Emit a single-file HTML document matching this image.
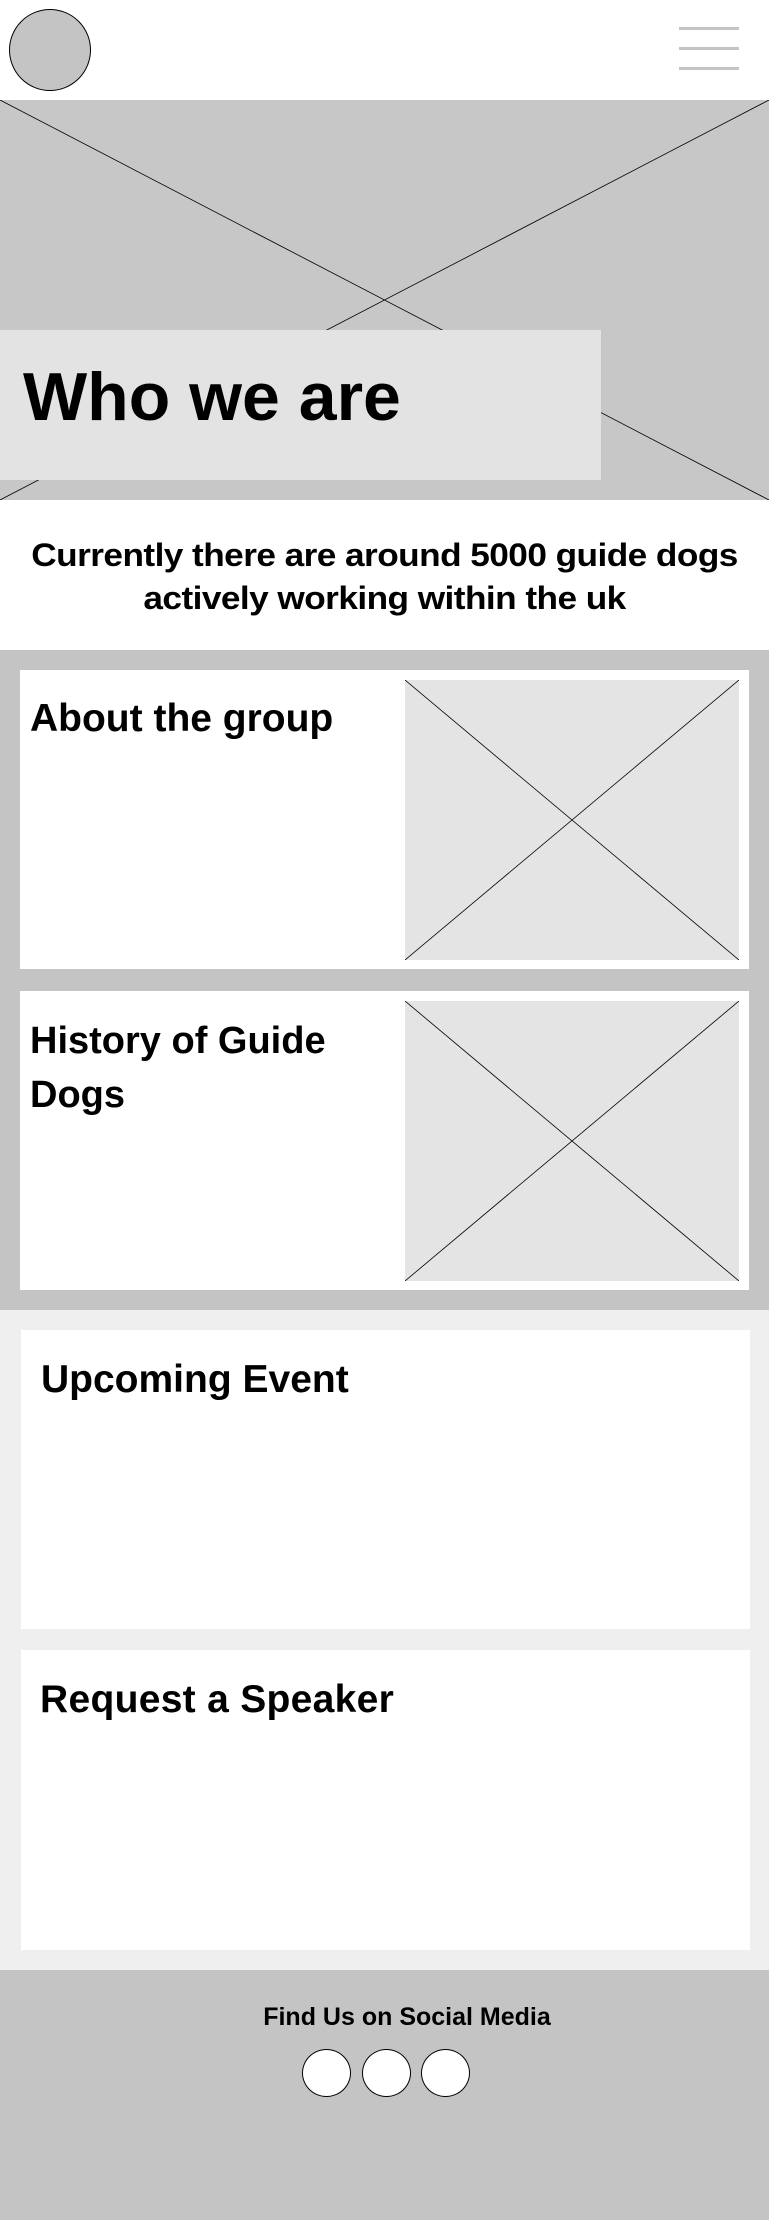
<!DOCTYPE html>
<html><head><meta charset="utf-8"><style>
*{margin:0;padding:0;box-sizing:border-box}
body{width:769px;height:2220px;position:relative;background:#fff;font-family:"Liberation Sans",sans-serif;overflow:hidden}
.a{position:absolute}
</style></head><body>
<div class="a" style="left:9px;top:9px;width:82px;height:82px;border-radius:50%;background:#c4c4c4;border:1px solid #000"></div>
<div class="a" style="left:679px;top:27px;width:60px;height:3px;background:#c4c4c4"></div>
<div class="a" style="left:679px;top:47px;width:60px;height:3px;background:#c4c4c4"></div>
<div class="a" style="left:679px;top:67px;width:60px;height:3px;background:#c4c4c4"></div>

<svg class="a" style="left:0;top:100px" width="769" height="400"><rect width="769" height="400" fill="#c7c7c7"/><line x1="0" y1="0" x2="769" y2="400" stroke="#000" stroke-width="0.8"/><line x1="769" y1="0" x2="0" y2="400" stroke="#000" stroke-width="0.8"/></svg>
<div class="a" style="left:0;top:330px;width:601px;height:150px;background:#e3e3e3"></div>
<div class="a" style="left:23px;top:357px;font-size:68px;font-weight:bold;line-height:80px;letter-spacing:0px">Who we are</div>

<div class="a" style="left:0;top:534px;width:769px;text-align:center;font-size:32px;font-weight:bold;line-height:43px;letter-spacing:-0.5px;transform:scaleX(1.1);transform-origin:384px 0">Currently there are around 5000 guide dogs<br>actively working within the uk</div>

<div class="a" style="left:0;top:650px;width:769px;height:660px;background:#c4c4c4"></div>
<div class="a" style="left:20px;top:670px;width:729px;height:299px;background:#fff"></div>
<svg class="a" style="left:405px;top:680px" width="334" height="280"><rect width="334" height="280" fill="#e4e4e4"/><line x1="0" y1="0" x2="334" y2="280" stroke="#000" stroke-width="0.8"/><line x1="334" y1="0" x2="0" y2="280" stroke="#000" stroke-width="0.8"/></svg>
<div class="a" style="left:30px;top:695px;font-size:39px;font-weight:bold;line-height:48px">About the group</div>

<div class="a" style="left:20px;top:991px;width:729px;height:299px;background:#fff"></div>
<svg class="a" style="left:405px;top:1001px" width="334" height="280"><rect width="334" height="280" fill="#e4e4e4"/><line x1="0" y1="0" x2="334" y2="280" stroke="#000" stroke-width="0.8"/><line x1="334" y1="0" x2="0" y2="280" stroke="#000" stroke-width="0.8"/></svg>
<div class="a" style="left:30px;top:1014px;font-size:38px;font-weight:bold;line-height:54px">History of Guide<br>Dogs</div>

<div class="a" style="left:0;top:1310px;width:769px;height:660px;background:#efefef"></div>
<div class="a" style="left:21px;top:1330px;width:729px;height:299px;background:#fff"></div>
<div class="a" style="left:41px;top:1356px;font-size:39px;font-weight:bold;line-height:48px">Upcoming Event</div>
<div class="a" style="left:21px;top:1650px;width:729px;height:300px;background:#fff"></div>
<div class="a" style="left:40px;top:1676px;font-size:39px;font-weight:bold;line-height:48px;letter-spacing:0.3px">Request a Speaker</div>

<div class="a" style="left:0;top:1970px;width:769px;height:250px;background:#c4c4c4"></div>
<div class="a" style="left:254px;top:2002px;width:306px;text-align:center;font-size:25px;font-weight:bold;line-height:30px;white-space:nowrap">Find Us on Social Media</div>
<div class="a" style="left:302px;top:2049px;width:49px;height:48px;border-radius:50%;background:#fff;border:1px solid #000"></div>
<div class="a" style="left:362px;top:2049px;width:49px;height:48px;border-radius:50%;background:#fff;border:1px solid #000"></div>
<div class="a" style="left:421px;top:2049px;width:49px;height:48px;border-radius:50%;background:#fff;border:1px solid #000"></div>
</body></html>
